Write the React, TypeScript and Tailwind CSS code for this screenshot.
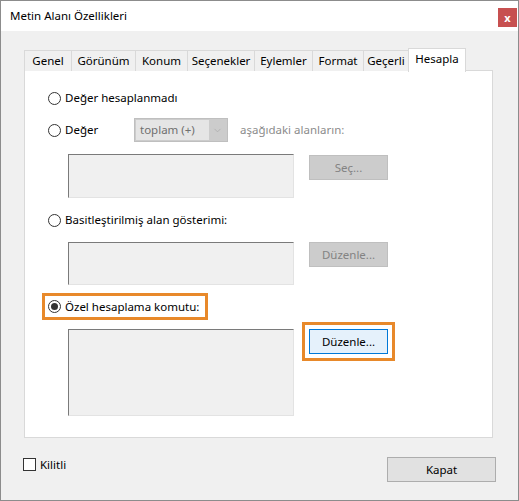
import { ChevronDown } from 'lucide-react';

const font = { fontFamily: '"Noto Sans", "Open Sans", sans-serif' };

const tabs = [
  { label: 'Genel', w: 'w-[48px]' },
  { label: 'Görünüm', w: 'w-[65px]' },
  { label: 'Konum', w: 'w-[53px]' },
  { label: 'Seçenekler', w: 'w-[68px]' },
  { label: 'Eylemler', w: 'w-[59px]' },
  { label: 'Format', w: 'w-[52px]' },
  { label: 'Geçerli', w: 'w-[46px]' },
];

function Radio({ checked = false }: { checked?: boolean }) {
  return (
    <span className="w-[13px] h-[13px] rounded-full border border-[#333] bg-white flex items-center justify-center shrink-0">
      {checked && <span className="w-[7px] h-[7px] rounded-full bg-[#333]" />}
    </span>
  );
}

function Field({ h }: { h: string }) {
  return (
    <div
      className={`w-[226px] ${h} bg-[#f0f0f0] border border-t-[#7a7a7a] border-l-[#7a7a7a] border-r-[#e3e3e3] border-b-[#e3e3e3] shrink-0`}
    />
  );
}

function DisabledButton({ label }: { label: string }) {
  return (
    <div className="w-[79px] h-[25px] bg-[#cccccc] border border-[#bfbfbf] flex items-center justify-center text-[#838383] shrink-0">
      {label}
    </div>
  );
}

export default function App() {
  return (
    <div
      style={font}
      className="w-[519px] h-[501px] flex flex-col border border-[#8c8c8c] bg-[#f0f0f0] text-[11.5px] text-black leading-none overflow-hidden"
    >
      {/* title bar */}
      <div className="h-[30px] bg-white flex items-start justify-between pl-[9px] pr-[1px] shrink-0">
        <span className="mt-[9px]">Metin Alanı Özellikleri</span>
        <span className="mt-[7px] w-[19px] h-[19px] bg-[#c75050] text-white font-bold text-[11px] flex items-center justify-center">
          x
        </span>
      </div>

      {/* tabs */}
      <div className="flex items-end ml-[23px] mt-[17px] h-[23px] relative z-10">
        {tabs.map((t, i) => (
          <div
            key={t.label}
            className={`${t.w} h-[21px] ${i > 0 ? '-ml-px' : ''} border border-b-0 border-[#d9d9d9] bg-[#f0f0f0] flex items-center justify-center`}
          >
            {t.label}
          </div>
        ))}
        <div className="w-[58px] h-[24px] -ml-px -mb-px border border-b-0 border-[#d9d9d9] bg-white flex items-start justify-center pt-[4px]">
          Hesapla
        </div>
      </div>

      {/* panel */}
      <div className="ml-[23px] w-[469px] h-[368px] -mt-px bg-white border border-[#d9d9d9] flex flex-col pl-[23px] shrink-0">
        <div className="mt-[17px] h-[20px] flex items-center gap-[4px]">
          <Radio />
          <span>Değer hesaplanmadı</span>
        </div>

        <div className="mt-[10px] h-[24px] flex items-center">
          <div className="w-[86px] flex items-center gap-[4px]">
            <Radio />
            <span>Değer</span>
          </div>
          <div className="w-[94px] h-[24px] bg-[#cccccc] border border-[#bfbfbf] flex items-center p-[1px]">
            <div className="w-[73px] h-full bg-[#e5e5e5] flex items-center pl-[4px] text-[#6f6f6f]">toplam (+)</div>
            <div className="flex-1 flex items-center justify-center">
              <ChevronDown className="w-[11px] h-[11px] text-[#a8a8a8]" strokeWidth={1.5} />
            </div>
          </div>
          <span className="ml-[12px] text-[#8c8c8c]">aşağıdaki alanların:</span>
        </div>

        <div className="mt-[12px] flex items-start pl-[20px] gap-[15px]">
          <Field h="h-[44px]" />
          <div className="mt-[1px]">
            <DisabledButton label="Seç..." />
          </div>
        </div>

        <div className="mt-[12px] h-[20px] flex items-center gap-[4px]">
          <Radio />
          <span>Basitleştirilmiş alan gösterimi:</span>
        </div>

        <div className="mt-[12px] flex items-start pl-[20px] gap-[15px]">
          <Field h="h-[43px]" />
          <DisabledButton label="Düzenle..." />
        </div>

        <div className="mt-[8px] -ml-[6px] self-start border-[3px] border-[#e8892a] h-[27px] flex items-center gap-[4px] pl-[3px] pr-[6px]">
          <Radio checked />
          <span>Özel hesaplama komutu:</span>
        </div>

        <div className="mt-[2px] flex items-start pl-[20px] gap-[8px]">
          <div className="mt-[7px]">
            <Field h="h-[87px]" />
          </div>
          <div className="border-[3px] border-[#e8892a] p-[4px] bg-white">
            <div className="w-[79px] h-[25px] bg-[#e5f1fb] border border-[#0078d7] flex items-center justify-center">
              Düzenle...
            </div>
          </div>
        </div>
      </div>

      {/* bottom */}
      <div className="mt-[19px] flex items-start justify-between pl-[22px] pr-[22px]">
        <div className="mt-[1px] flex items-center gap-[4px]">
          <span className="w-[13px] h-[13px] border border-[#333] bg-white" />
          <span>Kilitli</span>
        </div>
        <div className="w-[109px] h-[25px] bg-[#e1e1e1] border border-[#adadad] flex items-center justify-center">
          Kapat
        </div>
      </div>
    </div>
  );
}
